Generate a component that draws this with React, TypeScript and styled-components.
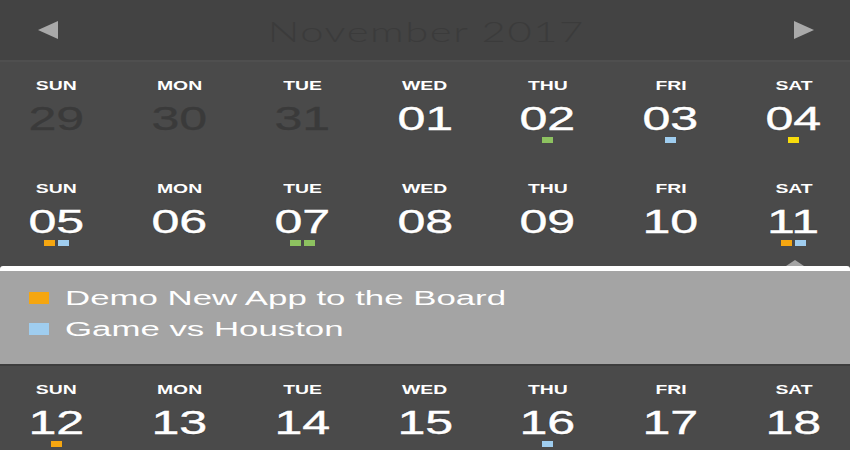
import styled, { createGlobalStyle } from "styled-components";

const GlobalStyle = createGlobalStyle`
  html, body {
    margin: 0;
    padding: 0;
    background: #4a4a4a;
    overflow: hidden;
  }
  body {
    font-family: "Liberation Sans", Arial, sans-serif;
  }
`;

const Page = styled.div`
  width: 850px;
  height: 450px;
  background: #4a4a4a;
  overflow: hidden;
`;

const Header = styled.div`
  height: 60px;
  background: #434343;
  border-bottom: 2px solid #4f4f4f;
  display: flex;
  align-items: center;
  justify-content: space-between;
  padding: 0 36px 0 38px;
`;

const Arrow = styled.div<{ $dir: "left" | "right" }>`
  width: 0;
  height: 0;
  border-top: 9px solid transparent;
  border-bottom: 9px solid transparent;
  ${(p) =>
    p.$dir === "left"
      ? "border-right: 20px solid #a9a9a9;"
      : "border-left: 20px solid #a9a9a9;"}
`;

const Title = styled.div`
  font-family: "Lato", "Open Sans", sans-serif;
  font-weight: 300;
  font-size: 27px;
  color: #3b3b3b;
  letter-spacing: 1px;
  transform: scaleX(1.55);
  margin-top: 2px;
`;

const Week = styled.div`
  display: grid;
  grid-template-columns: repeat(7, 1fr);
  height: 103px;
  margin: 0 -5px;
`;

const Day = styled.div`
  display: flex;
  flex-direction: column;
  align-items: center;
  padding-top: 17px;
`;

const DayName = styled.div`
  font-weight: bold;
  font-size: 12.5px;
  color: #ffffff;
  transform: scaleX(1.55);
  line-height: 14px;
`;

const DayNumber = styled.div<{ $muted?: boolean }>`
  font-size: 33px;
  line-height: 34px;
  margin-top: 9px;
  color: ${(p) => (p.$muted ? "#3a3a3a" : "#ffffff")};
  transform: scaleX(1.52);
  -webkit-text-stroke: ${(p) => (p.$muted ? "0.3px #3a3a3a" : "0.4px #ffffff")};
  text-shadow: ${(p) => (p.$muted ? "none" : "0 0 1px rgba(0,0,0,0.4)")};
`;

const Dots = styled.div`
  display: flex;
  gap: 3px;
  margin-top: 1px;
  height: 6px;
`;

const Dot = styled.span<{ $color: string }>`
  width: 11px;
  height: 6px;
  background: ${(p) => p.$color};
`;

const Panel = styled.div`
  position: relative;
  background: #a4a4a4;
  border-top: 5px solid #ffffff;
  border-bottom: 2px solid #3d3d3d;
  border-radius: 3px 3px 0 0;
  height: 100px;
  margin-top: -2px;
  padding: 17px 0 0 29px;
  box-sizing: border-box;
  display: flex;
  flex-direction: column;
  gap: 11px;
`;

const Caret = styled.div`
  position: absolute;
  top: -11px;
  left: 786px;
  width: 0;
  height: 0;
  border-left: 9px solid transparent;
  border-right: 9px solid transparent;
  border-bottom: 6px solid #a4a4a4;
`;

const LegendRow = styled.div`
  display: flex;
  align-items: center;
  height: 20px;
`;

const Swatch = styled.span<{ $color: string }>`
  width: 20px;
  height: 12px;
  background: ${(p) => p.$color};
  margin-right: 16px;
`;

const LegendText = styled.span`
  font-size: 20px;
  color: #ffffff;
  transform: scaleX(1.74);
  transform-origin: left center;
  white-space: nowrap;
`;

const ORANGE = "#f5a610";
const BLUE = "#9fcdef";
const GREEN = "#8dc260";
const YELLOW = "#f7dc0c";

const NAMES = ["SUN", "MON", "TUE", "WED", "THU", "FRI", "SAT"];

type Cell = { n: string; muted?: boolean; dots?: string[] };

const weeks: Cell[][] = [
  [
    { n: "29", muted: true },
    { n: "30", muted: true },
    { n: "31", muted: true },
    { n: "01" },
    { n: "02", dots: [GREEN] },
    { n: "03", dots: [BLUE] },
    { n: "04", dots: [YELLOW] },
  ],
  [
    { n: "05", dots: [ORANGE, BLUE] },
    { n: "06" },
    { n: "07", dots: [GREEN, GREEN] },
    { n: "08" },
    { n: "09" },
    { n: "10" },
    { n: "11", dots: [ORANGE, BLUE] },
  ],
  [
    { n: "12", dots: [ORANGE] },
    { n: "13" },
    { n: "14" },
    { n: "15" },
    { n: "16", dots: [BLUE] },
    { n: "17" },
    { n: "18" },
  ],
];

function WeekRow({ cells }: { cells: Cell[] }) {
  return (
    <Week>
      {cells.map((c, i) => (
        <Day key={i}>
          <DayName>{NAMES[i]}</DayName>
          <DayNumber $muted={c.muted}>{c.n}</DayNumber>
          <Dots>
            {(c.dots || []).map((d, j) => (
              <Dot key={j} $color={d} />
            ))}
          </Dots>
        </Day>
      ))}
    </Week>
  );
}

export default function App() {
  return (
    <Page>
      <GlobalStyle />
      <Header>
        <Arrow $dir="left" />
        <Title>November 2017</Title>
        <Arrow $dir="right" />
      </Header>
      <WeekRow cells={weeks[0]} />
      <WeekRow cells={weeks[1]} />
      <Panel>
        <Caret />
        <LegendRow>
          <Swatch $color={ORANGE} />
          <LegendText>Demo New App to the Board</LegendText>
        </LegendRow>
        <LegendRow>
          <Swatch $color={BLUE} />
          <LegendText>Game vs Houston</LegendText>
        </LegendRow>
      </Panel>
      <WeekRow cells={weeks[2]} />
    </Page>
  );
}
